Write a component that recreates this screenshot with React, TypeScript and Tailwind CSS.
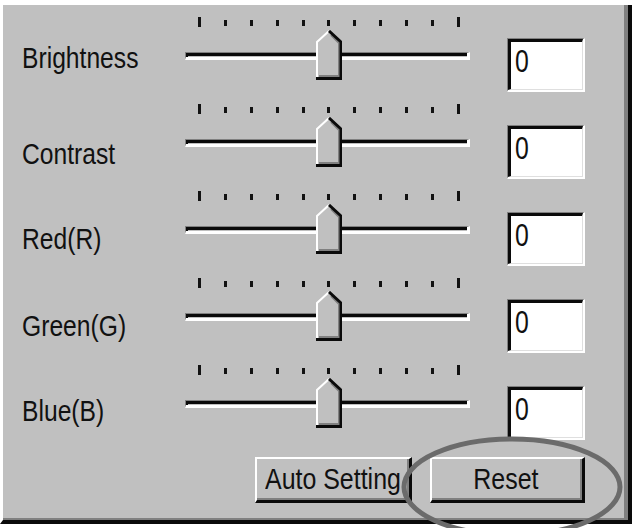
import React from "react";

const rows = [
  { name: "Brightness", mt: "mt-[24px]" },
  { name: "Contrast", mt: "mt-[33px]" },
  { name: "Red(R)", mt: "mt-[31px]" },
  { name: "Green(G)", mt: "mt-[31px]" },
  { name: "Blue(B)", mt: "mt-[29px]" },
];

const font = { fontFamily: '"Liberation Sans", Arial, sans-serif' };

function Ticks() {
  return (
    <div className="ml-[13px] flex h-[10px] w-[262px] items-end justify-between">
      {Array.from({ length: 11 }).map((_, i) => (
        <div
          key={i}
          className={
            i === 0 || i === 10
              ? "h-[10px] w-[3px] bg-[#121212]"
              : "mb-[1px] h-[6px] w-[3px] bg-[#121212]"
          }
        />
      ))}
    </div>
  );
}

function Thumb() {
  return (
    <svg
      className="absolute left-[131px] top-[13px]"
      width="26"
      height="50"
      viewBox="0 0 26 50"
    >
      <polygon points="13,1 1,12 1,49 25,49 25,12" fill="#c0c0c0" />
      <polyline points="1,48 1,12 13,1" fill="none" stroke="#ffffff" strokeWidth="2" />
      <polyline points="15,5 23,13 23,46 3,46" fill="none" stroke="#808080" strokeWidth="2" />
      <polyline points="13,1 25,12 25,48.5 0,48.5" fill="none" stroke="#0a0a0a" strokeWidth="3" />
    </svg>
  );
}

function Slider() {
  return (
    <div className="relative h-[87px] w-[285px] shrink-0">
      <Ticks />
      <div className="mt-[25px] h-[8px] w-[285px] border-t border-l border-t-[#808080] border-l-[#808080] border-b-[3px] border-r-[3px] border-b-white border-r-white">
        <div className="h-full w-full border-t-[3px] border-l-[2px] border-t-[#0a0a0a] border-l-[#0a0a0a]" />
      </div>
      <Thumb />
    </div>
  );
}

function ValueBox() {
  return (
    <div className="ml-[37px] mt-[21px] h-[54px] w-[78px] shrink-0 border-t border-l border-t-[#808080] border-l-[#808080] border-b-2 border-r-2 border-b-white border-r-white">
      <div className="h-full w-full border-t-[3px] border-l-[3px] border-t-[#0a0a0a] border-l-[#0a0a0a] border-b border-r border-b-[#dfdfdf] border-r-[#dfdfdf] bg-white pl-[4px] pt-[3px] text-[31px] leading-[34px] text-[#111]">
        <span className="inline-block origin-left scale-x-[0.8]">0</span>
      </div>
    </div>
  );
}

function Button({ label, w, center }: { label: string; w: string; center?: boolean }) {
  return (
    <div
      className={`h-[46px] ${w} border-t-2 border-l-2 border-t-white border-l-white border-b-[3px] border-r-[3px] border-b-[#0a0a0a] border-r-[#0a0a0a]`}
    >
      <div
        className={`flex h-full w-full items-center overflow-hidden whitespace-nowrap border-b-2 border-r-2 border-b-[#808080] border-r-[#808080] bg-[#c0c0c0] text-[29px] leading-[34px] text-[#111] ${
          center ? "justify-center" : "justify-start pl-[8px]"
        }`}
      >
        <span className={`inline-block scale-x-[0.86] ${center ? "origin-center" : "origin-left"}`}>{label}</span>
      </div>
    </div>
  );
}

export default function App() {
  return (
    <div className="relative h-[528px] w-[632px] overflow-hidden bg-white pt-[5px]" style={font}>
      <div className="h-[519px] w-[632px] border-l-[3px] border-l-white border-b-4 border-r-4 border-b-[#0a0a0a] border-r-[#0a0a0a]">
        <div className="h-full w-full border-b-2 border-r-4 border-b-[#808080] border-r-[#808080] bg-[#c0c0c0] pl-[19px] pt-[12px]">
          {rows.map((r) => (
            <div key={r.name} className="flex h-[87px]">
              <div className={`${r.mt} w-[163px] shrink-0 whitespace-nowrap text-[29px] leading-[34px] text-[#111]`}>
                <span className="inline-block origin-left scale-x-[0.85]">{r.name}</span>
              </div>
              <Slider />
              <ValueBox />
            </div>
          ))}
          <div className="ml-[233px] mt-[5px] flex gap-[18px]">
            <Button label="Auto Setting" w="w-[157px]" />
            <Button label="Reset" w="w-[155px]" center />
          </div>
        </div>
      </div>
      <svg className="pointer-events-none absolute left-0 top-0" width="632" height="528" viewBox="0 0 632 528">
        <ellipse cx="512" cy="487" rx="108" ry="48" fill="none" stroke="#6b6b6b" strokeWidth="5" />
      </svg>
    </div>
  );
}
